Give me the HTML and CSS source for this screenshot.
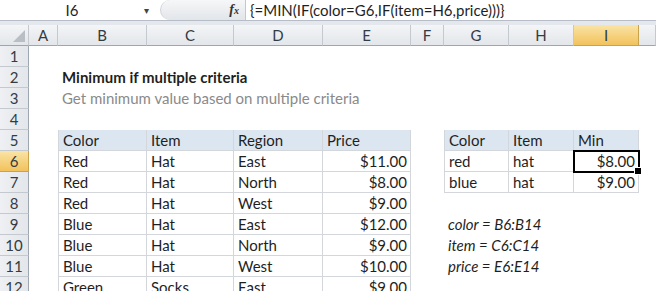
FILE: index.html
```html
<!DOCTYPE html>
<html lang="en">
<head>
    <meta charset="UTF-8">
    <title>Minimum if multiple criteria</title>
    <link rel="stylesheet" href="styles.css">
</head>
<body>
    <div class="formula-bar">
        <div class="name-box">I6</div>
        <div class="name-arrow">&#9662;</div>
        <div class="fx-area"><span class="fx">f<small>x</small></span></div>
        <div class="formula">{=MIN(IF(color=G6,IF(item=H6,price)))}</div>
    </div>
    <div class="gap"></div>

    <div class="sheet">
        <div class="row heads">
            <div class="corner"></div>
            <div class="ch">A</div>
            <div class="ch">B</div>
            <div class="ch">C</div>
            <div class="ch">D</div>
            <div class="ch">E</div>
            <div class="ch">F</div>
            <div class="ch">G</div>
            <div class="ch">H</div>
            <div class="ch on">I</div>
            <div class="ch"></div>
        </div>

        <div class="row"><div class="rh">1</div></div>
        <div class="row">
            <div class="rh">2</div>
            <div class="c col-b title">Minimum if multiple criteria</div>
        </div>
        <div class="row">
            <div class="rh">3</div>
            <div class="c col-b subtitle">Get minimum value based on multiple criteria</div>
        </div>
        <div class="row"><div class="rh">4</div></div>

        <div class="row">
            <div class="rh">5</div>
            <div class="c col-b t th first">Color</div>
            <div class="c col-c t th">Item</div>
            <div class="c col-d t th">Region</div>
            <div class="c col-e t th">Price</div>
            <div class="c col-g t th first">Color</div>
            <div class="c col-h t th">Item</div>
            <div class="c col-i t th">Min</div>
        </div>
        <div class="row">
            <div class="rh on">6</div>
            <div class="c col-b t first">Red</div>
            <div class="c col-c t">Hat</div>
            <div class="c col-d t">East</div>
            <div class="c col-e t num">$11.00</div>
            <div class="c col-g t first">red</div>
            <div class="c col-h t">hat</div>
            <div class="c col-i t num sel">$8.00</div>
        </div>
        <div class="row">
            <div class="rh">7</div>
            <div class="c col-b t first">Red</div>
            <div class="c col-c t">Hat</div>
            <div class="c col-d t">North</div>
            <div class="c col-e t num">$8.00</div>
            <div class="c col-g t first">blue</div>
            <div class="c col-h t">hat</div>
            <div class="c col-i t num">$9.00</div>
        </div>
        <div class="row">
            <div class="rh">8</div>
            <div class="c col-b t first">Red</div>
            <div class="c col-c t">Hat</div>
            <div class="c col-d t">West</div>
            <div class="c col-e t num">$9.00</div>
        </div>
        <div class="row">
            <div class="rh">9</div>
            <div class="c col-b t first">Blue</div>
            <div class="c col-c t">Hat</div>
            <div class="c col-d t">East</div>
            <div class="c col-e t num">$12.00</div>
            <div class="c col-g note">color = B6:B14</div>
        </div>
        <div class="row">
            <div class="rh">10</div>
            <div class="c col-b t first">Blue</div>
            <div class="c col-c t">Hat</div>
            <div class="c col-d t">North</div>
            <div class="c col-e t num">$9.00</div>
            <div class="c col-g note">item = C6:C14</div>
        </div>
        <div class="row">
            <div class="rh">11</div>
            <div class="c col-b t first">Blue</div>
            <div class="c col-c t">Hat</div>
            <div class="c col-d t">West</div>
            <div class="c col-e t num">$10.00</div>
            <div class="c col-g note">price = E6:E14</div>
        </div>
        <div class="row">
            <div class="rh">12</div>
            <div class="c col-b t first">Green</div>
            <div class="c col-c t">Socks</div>
            <div class="c col-d t">East</div>
            <div class="c col-e t num">$9.00</div>
        </div>
    </div>
</body>
</html>
```

FILE: styles.css
```css
* {
    box-sizing: border-box;
}

body {
    margin: 0;
    font-family: Lato, "Open Sans", sans-serif;
    font-size: 15px;
    color: #1f1f1f;
    background: #fff;
    overflow: hidden;
}

/* formula bar */
.formula-bar {
    display: flex;
    height: 21px;
    border-bottom: 1px solid #b7bdc6;
    line-height: 20px;
}

.name-box {
    width: 144px;
    text-align: center;
}

.name-arrow {
    width: 16px;
    font-size: 10px;
    color: #444;
    text-align: left;
}

.fx-area {
    width: 86px;
    display: flex;
    align-items: center;
    justify-content: flex-end;
    padding-right: 6px;
    background: linear-gradient(#f6f7f8, #e2e5e9);
    border-radius: 10px 0 0 10px;
    border-left: 1px solid #cfd3d8;
    border-right: 1px solid #c3c8ce;
}

.fx {
    font-family: "Liberation Serif", serif;
    font-style: italic;
    font-weight: bold;
    font-size: 14px;
    color: #333;
}

.fx small {
    font-size: 10px;
}

.formula {
    padding-left: 4px;
    white-space: nowrap;
}

.gap {
    height: 4px;
    background: #e4e7eb;
}

/* grid */
.row {
    display: grid;
    grid-template-columns: 29px 29px 89px 87px 89px 88px 33px 65px 65px 65px 1fr;
    height: 21px;
}

.heads .ch,
.corner {
    background: linear-gradient(#f3f5f7, #e3e6ea);
    border-right: 1px solid #c4c9cf;
    border-bottom: 1px solid #9ea6b0;
    text-align: center;
    line-height: 20px;
    color: #333b45;
}

.corner {
    position: relative;
}

.corner::after {
    content: "";
    position: absolute;
    right: 3px;
    bottom: 3px;
    border-left: 12px solid transparent;
    border-bottom: 12px solid #b9bec5;
}

.ch.on,
.rh.on {
    background: linear-gradient(#fae4a6, #f2c25c);
    border-color: #c9a24e;
}

.rh {
    grid-column: 1;
    background: linear-gradient(90deg, #eef0f3, #e3e6ea);
    border-right: 1px solid #9ea6b0;
    border-bottom: 1px solid #c4c9cf;
    text-align: center;
    line-height: 20px;
    color: #333b45;
}

.c {
    padding: 0 4px;
    line-height: 20px;
    white-space: nowrap;
}

.col-b { grid-column: 3; }
.col-c { grid-column: 4; }
.col-d { grid-column: 5; }
.col-e { grid-column: 6; }
.col-g { grid-column: 8; }
.col-h { grid-column: 9; }
.col-i { grid-column: 10; }

.title {
    font-weight: bold;
}

.subtitle {
    color: #8a8a8a;
}

.t {
    border-right: 1px solid #d3d7dc;
    border-bottom: 1px solid #d3d7dc;
}

.t.first {
    border-left: 1px solid #d3d7dc;
}

.th {
    background: #dce6f1;
}

.num {
    text-align: right;
    padding-right: 3px;
}

.sel {
    position: relative;
    outline: 2px solid #000;
    outline-offset: -1px;
}

.sel::after {
    content: "";
    position: absolute;
    right: -4px;
    bottom: -4px;
    width: 6px;
    height: 6px;
    background: #000;
    border: 1px solid #fff;
}

.note {
    font-style: italic;
}
```
